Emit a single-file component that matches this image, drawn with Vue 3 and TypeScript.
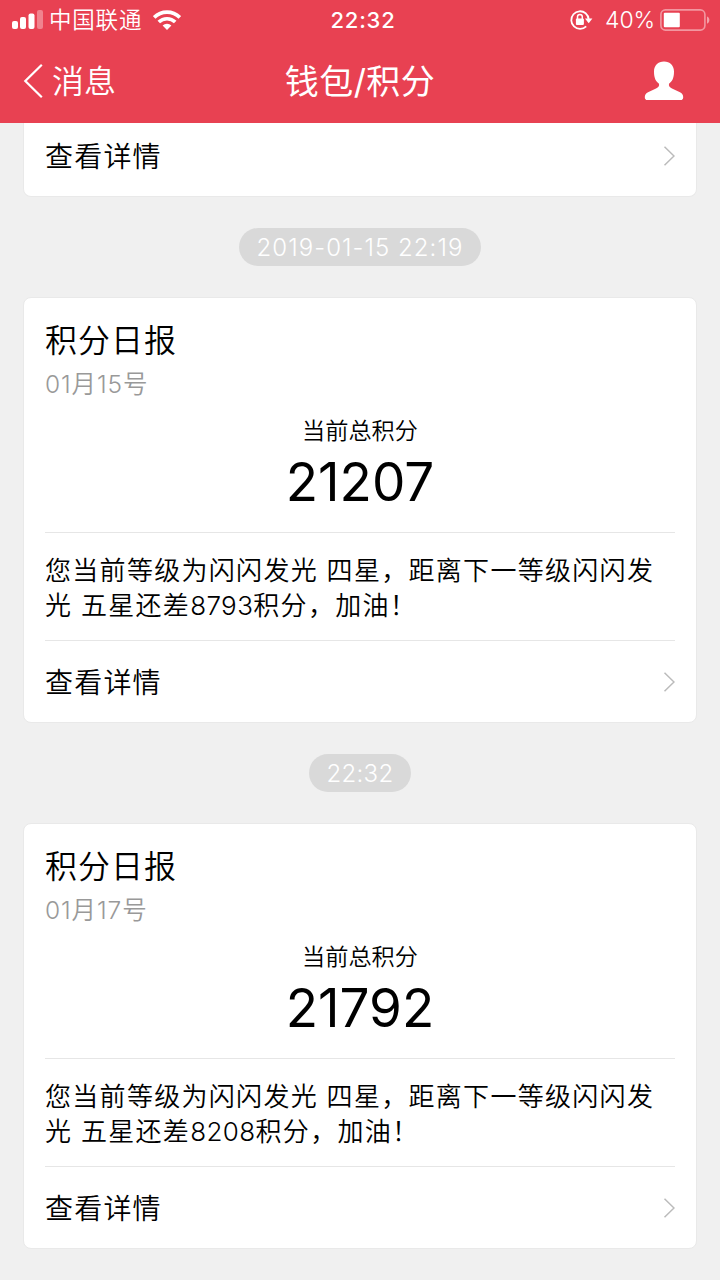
<script setup lang="ts">
interface Report {
  time: string
  date: string
  total: string
  remaining: string
}

const reports: Report[] = [
  { time: '2019-01-15 22:19', date: '15', total: '21207', remaining: '8793' },
  { time: '22:32', date: '17', total: '21792', remaining: '8208' },
]
</script>

<template>
  <div class="screen">
    <header class="header">
      <div class="status">
        <div class="status-left">
          <svg class="signal" width="31" height="20" viewBox="0 0 31 20" fill="#fff">
            <rect x="0" y="11" width="6" height="8" rx="2" />
            <rect x="8" y="7" width="6" height="12" rx="2" />
            <rect x="16.5" y="3.5" width="6" height="15.5" rx="2" />
            <rect x="25" y="0" width="6" height="19" rx="2" opacity="0.35" />
          </svg>
          <span class="carrier">中国联通</span>
          <svg class="wifi" width="28" height="20" viewBox="0 0 28 20">
            <g fill="none" stroke="#fff" stroke-width="3.6">
              <path d="M1.2 7.4 A18.2 18.2 0 0 1 26.8 7.4" />
              <path d="M5.8 12.1 A11.6 11.6 0 0 1 22.2 12.1" />
            </g>
            <path d="M9.6 15.6 A6.4 6.4 0 0 1 18.4 15.6 L14 20 Z" fill="#fff" />
          </svg>
        </div>
        <span class="clock">22:32</span>
        <div class="status-right">
          <svg class="lock" width="23" height="20" viewBox="0 0 23 20">
            <path d="M15.6 3.2 A8.8 8.8 0 1 0 16.2 16.4 M15.6 3.2 A8.8 8.8 0 0 1 18.7 9.4" fill="none" stroke="#fff" stroke-width="1.8" />
            <path d="M15 8.6 H22.4 L18.7 13.2 Z" fill="#fff" />
            <rect x="5.9" y="8.5" width="8" height="6.5" rx="1" fill="#fff" />
            <path d="M7.5 9 V6.8 a2.4 2.4 0 0 1 4.8 0 V9" fill="none" stroke="#fff" stroke-width="1.5" />
          </svg>
          <span class="percent">40%</span>
          <svg class="battery" width="50" height="22" viewBox="0 0 50 22">
            <rect x="0.9" y="0.9" width="44" height="20.2" rx="4.5" fill="none" stroke="#fff" stroke-opacity="0.45" stroke-width="1.6" />
            <rect x="3.8" y="3.8" width="16" height="14.5" rx="1" fill="#fff" />
            <path d="M47 7.5 c3.2 1.2 3.2 6 0 7.2 z" fill="#fff" opacity="0.5" />
          </svg>
        </div>
      </div>
      <nav class="nav">
        <div class="back">
          <svg width="20" height="34" viewBox="0 0 20 34" fill="none" stroke="#fff" stroke-width="2.2">
            <path d="M18.8 0.8 L2.3 17 L18.8 33.2" />
          </svg>
          <span>消息</span>
        </div>
        <h1 class="heading">钱包/积分</h1>
        <svg class="person" width="40" height="40" viewBox="0 0 40 40" fill="#fff">
          <path d="M20 0.5 C14 .5 10 4.5 10 10.5 C10 17.5 12 20.5 15 22.7 C15.5 24.7 14.5 26.2 12 27.4 L4 31.3 C1.5 32.6 .8 34.2 .8 36.2 Q.8 39 3.5 39 H36.5 Q39.2 39 39.2 36.2 C39.2 34.2 38.5 32.6 36 31.3 L28 27.4 C25.5 26.2 24.5 24.7 25 22.7 C28 20.5 30 17.5 30 10.5 C30 4.5 26 .5 20 .5 Z" />
        </svg>
      </nav>
    </header>

    <main class="feed">
      <section class="card card-cut">
        <div class="details">
          <span>查看详情</span>
          <svg width="14" height="22" viewBox="0 0 14 22" fill="none" stroke="#bbb" stroke-width="1.5">
            <path d="M3.5 1.7 L13 11 L3.5 20.3" />
          </svg>
        </div>
      </section>

      <template v-for="report in reports" :key="report.time">
        <time class="stamp" :class="{ 'stamp-dated': report.time.length > 5 }">{{ report.time }}</time>
        <section class="card">
          <h2 class="title">积分日报</h2>
          <p class="date">01月{{ report.date }}号</p>
          <p class="label">当前总积分</p>
          <p class="total">{{ report.total }}</p>
          <div class="message">
            您当前等级为闪闪发光 四星，距离下一等级闪闪发<br />光 五星还差<span class="digits">{{ report.remaining }}</span>积分，加油！
          </div>
          <div class="details">
            <span>查看详情</span>
            <svg width="14" height="22" viewBox="0 0 14 22" fill="none" stroke="#bbb" stroke-width="1.5">
              <path d="M3.5 1.7 L13 11 L3.5 20.3" />
            </svg>
          </div>
        </section>
      </template>
    </main>
  </div>
</template>

<style>
body {
  margin: 0;
}
</style>

<style scoped>
.screen {
  width: 720px;
  height: 1280px;
  overflow: hidden;
  display: flex;
  flex-direction: column;
  background: #f0f0f0;
  color: #000;
  font-family: Inter, "Noto Sans CJK SC", sans-serif;
  font-weight: 350;
}
h1,
h2,
p {
  margin: 0;
  font-weight: 350;
}
svg {
  display: block;
  flex: none;
}
.header {
  flex: none;
  height: 123px;
  background: #e84152;
  color: #fff;
}
.status {
  height: 40px;
  display: grid;
  grid-template-columns: 1fr auto 1fr;
  align-items: center;
  padding: 0 10px 0 12px;
}
.status-left,
.status-right {
  height: 40px;
  display: flex;
  align-items: center;
}
.status-right {
  justify-content: flex-end;
}
.carrier {
  margin-left: 6px;
  font-size: 22.5px;
  letter-spacing: 0.8px;
  line-height: 38px;
}
.wifi {
  margin-left: 11px;
}
.clock {
  margin-left: 4px;
  font-size: 22px;
  line-height: 40px;
  font-weight: 500;
  letter-spacing: 0.8px;
}
.percent {
  margin: 0 5px 0 12px;
  font-size: 23px;
  line-height: 40px;
  letter-spacing: -0.1px;
}
.battery {
  margin-bottom: 1px;
}
.nav {
  height: 80px;
  display: grid;
  grid-template-columns: 1fr auto 1fr;
  align-items: center;
  padding: 0 36px 0 23px;
}
.back {
  height: 80px;
  display: flex;
  align-items: center;
  gap: 9px;
  font-size: 32px;
  line-height: 80px;
}
.back span {
  padding-top: 2px;
}
.heading {
  margin-left: 13px;
  padding-top: 2px;
  font-size: 34px;
  font-weight: 400;
  line-height: 80px;
  letter-spacing: 0.4px;
}
.person {
  justify-self: end;
}
.feed {
  display: flex;
  flex-direction: column;
  align-items: center;
}
.card {
  box-sizing: border-box;
  width: 674px;
  height: 426px;
  padding: 0 21px;
  border: 1px solid #e9e9e9;
  border-radius: 8px;
  background: #fff;
}
.card-cut {
  height: 74px;
  border-top: 0;
  border-radius: 0 0 8px 8px;
}
.card-cut .details {
  height: 65px;
}
.stamp {
  box-sizing: border-box;
  height: 38px;
  margin: 31px 0;
  padding: 1px 17px 0;
  border-radius: 19px;
  background: #d9d9d9;
  color: #fff;
  font-size: 24px;
  line-height: 38px;
  letter-spacing: 0.3px;
}
.stamp-dated {
  padding: 1px 17.5px 0;
  letter-spacing: 1.05px;
}
.title {
  padding-top: 21px;
  font-size: 32px;
  line-height: 44px;
  letter-spacing: 1px;
}
.date {
  color: #999;
  font-size: 24.5px;
  line-height: 42px;
  letter-spacing: 0.9px;
}
.label {
  padding-top: 10px;
  text-align: center;
  font-size: 23.2px;
  line-height: 32px;
}
.total {
  height: 85px;
  text-align: center;
  font-size: 53px;
  line-height: 70px;
  font-weight: 400;
}
.message {
  box-sizing: border-box;
  height: 109px;
  padding-top: 20px;
  border-top: 1px solid #e6e6e6;
  border-bottom: 1px solid #e6e6e6;
  font-size: 26px;
  line-height: 35px;
  letter-spacing: 1.3px;
  white-space: nowrap;
}
.digits {
  letter-spacing: 0.4px;
}
.details {
  height: 81px;
  display: flex;
  align-items: center;
  justify-content: space-between;
  font-size: 28px;
  letter-spacing: 1.2px;
}
.details span {
  padding-bottom: 2px;
}
</style>
